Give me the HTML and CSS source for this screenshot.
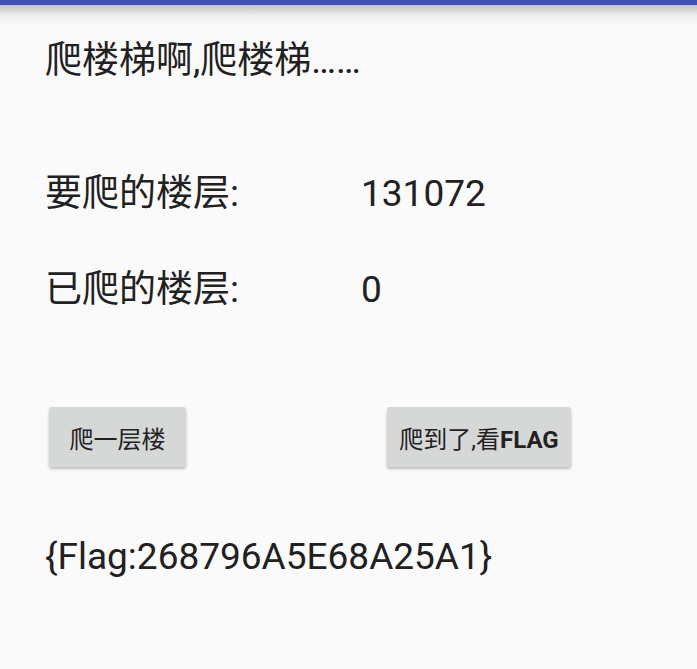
FILE: index.html
```html
<!DOCTYPE html>
<html lang="zh">
<head>
<meta charset="utf-8">
<link rel="stylesheet" href="styles.css">
</head>
<body>
<div class="appbar"></div>
<div class="appbar-shadow"></div>
<main class="content">
  <div class="title">爬楼梯啊,爬楼梯……</div>
  <div class="stats">
    <div class="label">要爬的楼层:</div><div class="value">131072</div>
    <div class="label">已爬的楼层:</div><div class="value">0</div>
  </div>
  <div class="buttons">
    <button class="btn btn-left">爬一层楼</button>
    <button class="btn btn-right">爬到了,看<span class="latin">FLAG</span></button>
  </div>
  <div class="flag">{Flag:268796A5E68A25A1}</div>
</main>
</body>
</html>
```
FILE: styles.css
```css
html, body {
  margin: 0;
  padding: 0;
  background: #fafafa;
  width: 697px;
  height: 669px;
  overflow: hidden;
}
body {
  font-family: Roboto, "Noto Sans CJK SC", sans-serif;
  color: #212121;
}
.appbar {
  height: 5px;
  background: #3f51b5;
}
.appbar-shadow {
  height: 20px;
  background: linear-gradient(to bottom, rgba(0,0,0,0.22), rgba(0,0,0,0.06) 50%, rgba(0,0,0,0));
}
.content {
  padding: 12px 0 0 45px;
}
.title {
  font-size: 37px;
  line-height: 48px;
}
.stats {
  margin-top: 85px;
  display: grid;
  grid-template-columns: 316px auto;
  row-gap: 48px;
  font-size: 37px;
  line-height: 48px;
}
.buttons {
  margin-top: 93px;
  display: flex;
  padding-left: 4px;
  gap: 201px;
}
.btn {
  height: 60px;
  border: none;
  border-radius: 3px;
  background: #d6d7d7;
  box-shadow: 0 2px 3px rgba(0,0,0,0.25);
  font-family: Roboto, "Noto Sans CJK SC", sans-serif;
  font-size: 24px;
  color: #222;
  padding: 0;
}
.btn-left { width: 137px; }
.btn-right { width: 184px; }
.latin { font-weight: 700; }
.flag {
  margin-top: 66px;
  font-size: 37px;
  line-height: 48px;
}
```
